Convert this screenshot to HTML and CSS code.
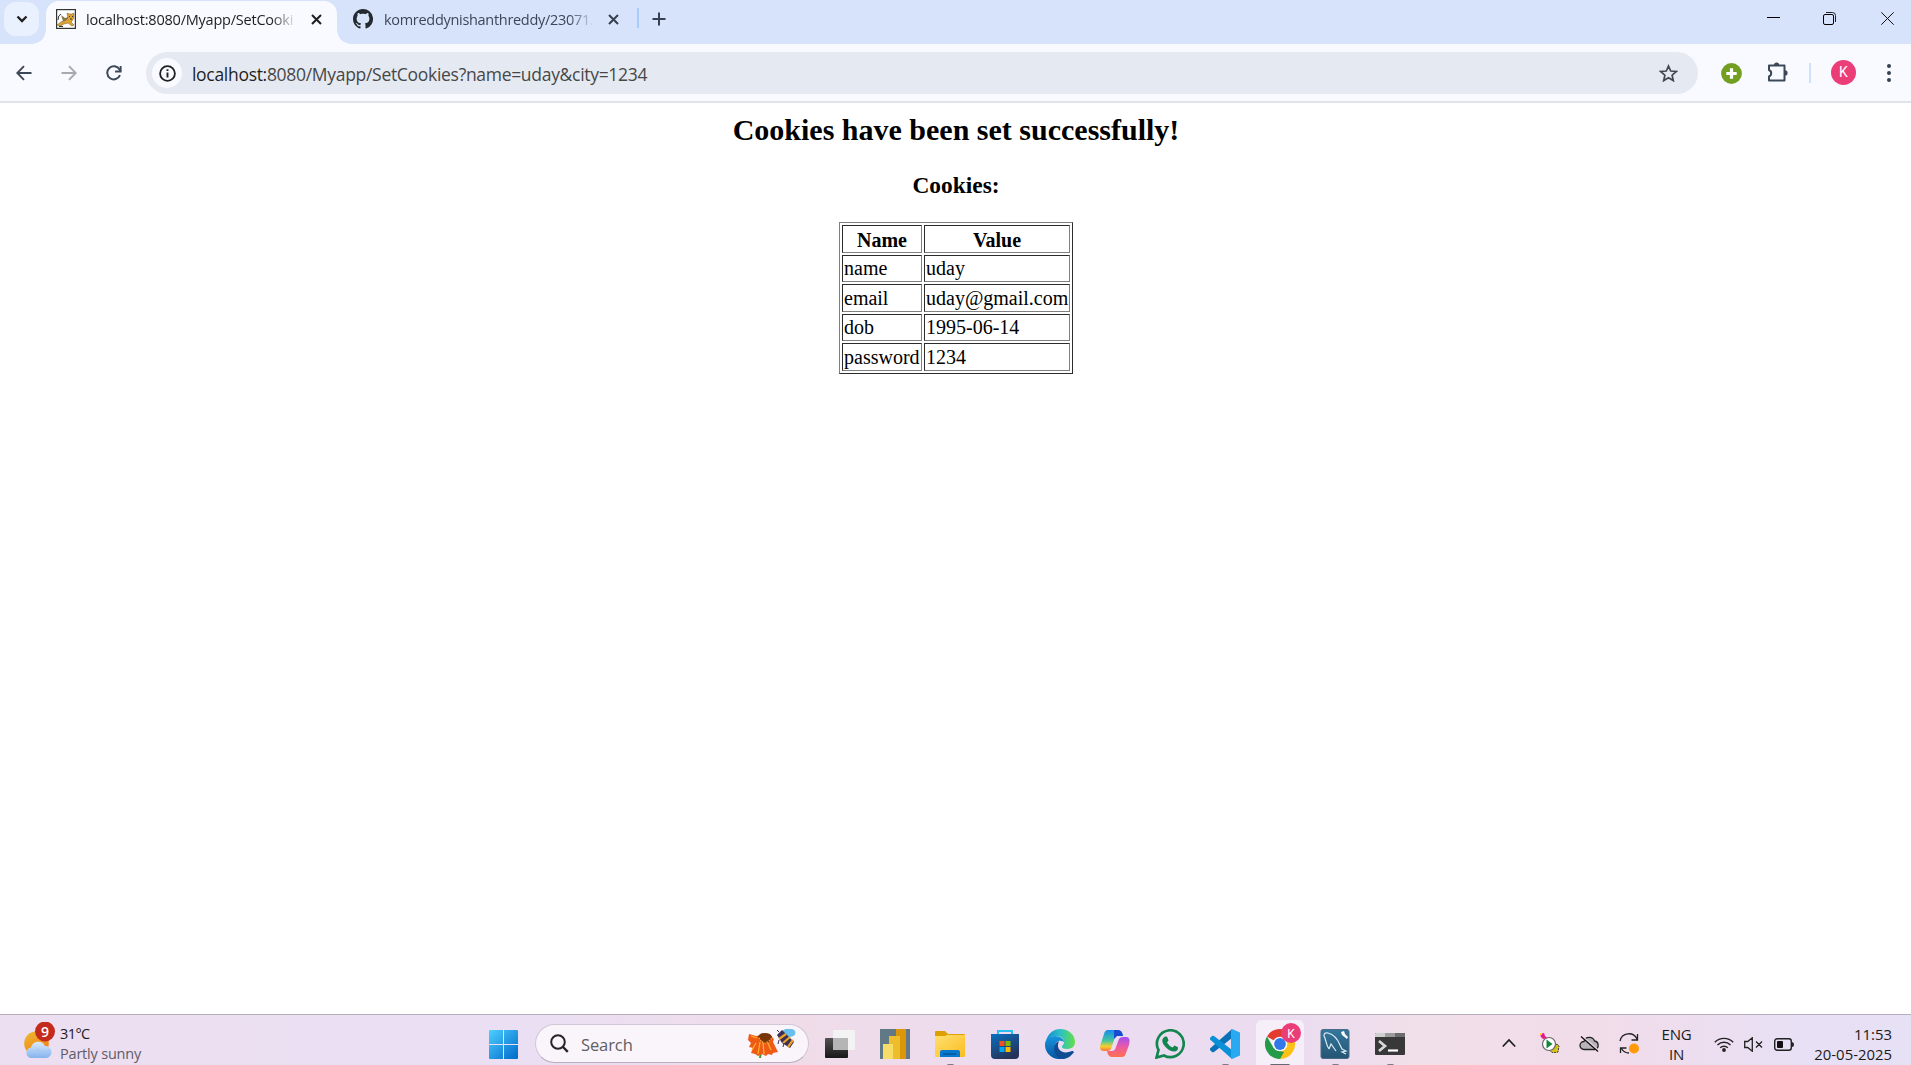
FILE: index.html
```html
<!DOCTYPE html>
<html lang="en">
<head>
<meta charset="utf-8">
<title>localhost:8080/Myapp/SetCookies</title>
<link rel="stylesheet" href="styles.css">
</head>
<body>
<header class="tabstrip">
  <button class="tab-search" aria-label="Search tabs"><svg width="12" height="8" viewBox="0 0 12 8"><path d="M1.5 1.5 6 6 10.500 1.500" fill="none" stroke="#1f1f1f" stroke-width="2.300"/></svg></button>
  <div class="tab tab-active">
    <svg class="favicon" width="20" height="20" viewBox="0 0 20 20"><rect x=".6" y=".6" width="18.800" height="18.800" fill="#fff" stroke="#333" stroke-width="1.200"/><path d="M5 6l4 3 3-1 1 3-5 2-3 4-3-1 5-4z" fill="#8a7748"/><path d="M11 4l2 1h3l2-1v5l-2 3-1 1 3 3-2 1-4-3-4 1-4 2-3-1 4-3 5-2 2-2z" fill="#dda435" stroke="#73572a" stroke-width=".5"/><path d="M2 11q0-5 3-6M3 17.500h4M13 7.500h1M16 7.500h1M14 10h2" stroke="#333" fill="none"/></svg>
    <span class="tab-title">localhost:8080/Myapp/SetCooki</span>
    <svg class="tab-close" width="11" height="11" viewBox="0 0 11 11"><path d="M1 1l9 9M10 1l-9 9" stroke="#1f1f1f" stroke-width="2"/></svg>
  </div>
  <div class="tab">
    <svg class="favicon" width="20" height="20" viewBox="0 0 16 16"><path fill="#24292f" d="M8 0C3.580 0 0 3.580 0 8c0 3.540 2.290 6.530 5.470 7.590.4.070.550-.170.550-.380 0-.190-.010-.820-.010-1.490-2.010.370-2.530-.490-2.690-.940-.090-.230-.480-.940-.820-1.130-.280-.150-.680-.520-.010-.530.630-.010 1.080.580 1.230.820.720 1.210 1.870.870 2.330.660.070-.520.280-.870.510-1.070-1.780-.2-3.640-.890-3.640-3.950 0-.870.310-1.590.820-2.150-.080-.2-.360-1.020.080-2.120 0 0 .670-.210 2.200.820.640-.180 1.320-.270 2-.270s1.360.090 2 .270c1.530-1.040 2.200-.820 2.200-.820.440 1.100.160 1.920.080 2.120.510.560.820 1.270.820 2.150 0 3.070-1.870 3.750-3.650 3.950.290.250.540.730.540 1.480 0 1.070-.010 1.930-.010 2.200 0 .210.150.460.550.380A8 8 0 0 0 8 0z"/></svg>
    <span class="tab-title muted">komreddynishanthreddy/23071.</span>
    <svg class="tab-close" width="11" height="11" viewBox="0 0 11 11"><path d="M1 1l9 9M10 1l-9 9" stroke="#354050" stroke-width="2"/></svg>
  </div>
  <span class="tab-divider"></span>
  <svg class="new-tab" width="14" height="14" viewBox="0 0 14 14"><path d="M7 .5v13M.5 7h13" stroke="#354050" stroke-width="2"/></svg>
  <div class="window-controls">
    <svg width="13" height="13"><path d="M0 5.500h13" stroke="#000"/></svg>
    <svg width="13" height="13"><rect x=".5" y="2.500" width="10" height="10" rx="1.500" fill="none" stroke="#000"/><path d="M3 .5h6.500q3 0 3 3V10" fill="none" stroke="#222"/></svg>
    <svg width="13" height="13"><path d="M.3.3l12.400 12.400M12.700.3.3 12.700" stroke="#111"/></svg>
  </div>
</header>
<nav class="toolbar">
  <svg class="back" width="16" height="16" viewBox="0 0 16 16"><path d="M15.500 8H1.500M8 1.200 1.300 8 8 14.800" fill="none" stroke="#3c4858" stroke-width="1.900"/></svg>
  <svg class="forward" width="16" height="16" viewBox="0 0 16 16"><path d="M.5 8h14M8 1.200 14.700 8 8 14.800" fill="none" stroke="#a6a9ae" stroke-width="1.900"/></svg>
  <svg class="reload" width="16" height="16" viewBox="0 0 16 16"><path d="M14 10.200A6.600 6.600 0 1 1 13.600 4.500L14.500 6" fill="none" stroke="#3c4858" stroke-width="2"/><path d="M15.600 1v6.500H9.100V5.600h4.600V1z" fill="#3c4858"/></svg>
  <div class="omnibox">
    <span class="site-info"><svg width="17" height="17" viewBox="0 0 17 17"><circle cx="8.500" cy="8.500" r="7.400" fill="none" stroke="#1f1f1f" stroke-width="1.800"/><path d="M8.500 7.500v5M8.500 4.300v1.800" stroke="#1f1f1f" stroke-width="1.900"/></svg></span>
    <span class="url"><span class="host">localhost:</span>8080/Myapp/SetCookies?name=uday&amp;city=1234</span>
    <svg class="star" width="19" height="18" viewBox="0 0 19 18"><path d="M9.500 2l2.200 5 5.600.5-4.200 3.700 1.200 5.400-4.800-2.900-4.800 2.900 1.200-5.400L1.700 7.500l5.600-.5z" fill="none" stroke="#43474e" stroke-width="1.700"/></svg>
  </div>
  <svg class="extension" width="21" height="21" viewBox="0 0 21 21"><circle cx="10.500" cy="10.500" r="10.400" fill="#739f20"/><path d="M10.500 5.300v10.400M5.300 10.500h10.400" stroke="#fff" stroke-width="3.200"/></svg>
  <svg class="puzzle" width="21" height="21" viewBox="0 0 21 21"><path d="M2 3.500h15.500v15H2V14.500a3.500 3.500 0 0 0 0-6.500z" fill="none" stroke="#3c4858" stroke-width="2" stroke-linejoin="round"/><path d="M7 3a2.600 2.600 0 0 1 5.200 0zM18 8.300a2.600 2.600 0 0 1 0 5.200z" fill="#3c4858"/></svg>
  <span class="toolbar-divider"></span>
  <span class="avatar">K</span>
  <svg class="menu" width="4" height="18" viewBox="0 0 4 18"><g fill="#354050"><circle cx="2" cy="2" r="2"/><circle cx="2" cy="9" r="2"/><circle cx="2" cy="16" r="2"/></g></svg>
</nav>
<main class="page">
  <h2>Cookies have been set successfully!</h2>
  <h3>Cookies:</h3>
  <table>
    <tr class="tall"><th class="col-name">Name</th><th class="col-value">Value</th></tr>
    <tr><td>name</td><td>uday</td></tr>
    <tr class="tall"><td>email</td><td>uday@gmail.com</td></tr>
    <tr><td>dob</td><td>1995-06-14</td></tr>
    <tr class="tall"><td>password</td><td>1234</td></tr>
  </table>
</main>
<footer class="taskbar">
  <div class="weather">
    <svg width="32" height="38" viewBox="0 0 32 38"><defs><linearGradient id="sun" x2=".6" y2="1"><stop stop-color="#e9bd35"/><stop offset="1" stop-color="#f77d12"/></linearGradient><linearGradient id="cloud" x2="0" y2="1"><stop stop-color="#dceafc"/><stop offset="1" stop-color="#85b3ec"/></linearGradient></defs><circle cx="12.500" cy="21.500" r="12.300" fill="url(#sun)"/><path d="M7 36a5.300 5.300 0 0 1 0-10.500A7.500 7.500 0 0 1 21 24a6 6 0 0 1 1 12z" fill="url(#cloud)"/><path d="M6 30q7 0 7-3 5 4 13 2" fill="none" stroke="#a5c6f3"/><circle cx="21" cy="9.500" r="10" fill="#c42b1c"/><text x="21" y="14.500" class="badge-text">9</text></svg>
    <div class="weather-text"><span>31°C</span><span class="weather-desc">Partly sunny</span></div>
  </div>
  <svg class="start" width="29" height="29" viewBox="0 0 29 29"><defs><linearGradient id="win" gradientUnits="userSpaceOnUse" x2="29" y2="29"><stop stop-color="#4dd0ff"/><stop offset="1" stop-color="#0067ca"/></linearGradient></defs><path d="M1 0h13v14H0V1q0-1 1-1zM15 0h13q1 0 1 1v13H15zM0 15h14v14H1q-1 0-1-1zM15 15h14v13q0 1-1 1H15z" fill="url(#win)"/></svg>
  <div class="search">
    <svg width="19" height="19" viewBox="0 0 19 19"><circle cx="8" cy="8" r="6.800" fill="none" stroke="#252525" stroke-width="2"/><path d="M13 13l4.800 4.800" stroke="#252525" stroke-width="2.400"/></svg>
    <span>Search</span>
    <svg class="flower" width="48" height="30" viewBox="0 0 48 30"><path d="M12 23h2l-1 6h-2z" fill="#3f9b2a"/><path d="M1 5l7 2 8-1 7 1 3 3-1 3 2 4 3 6-5 1-1 2-4-1-2 2-4-2-4 2-3-2-4-1 2-5-4-1 2-4-3-3z" fill="#ef5a17"/><path d="M8 14l-4 7M12 13l-2 12M15 13l1 12M19 12l4 9M9 9L3 7" stroke="#ffae29" stroke-width="1.300"/><path d="M10 8q1-4 7-4 6 0 7 4l-3 5-5 1z" fill="#773408"/><path d="M11 9l2 3 4 2 4-2 3-3" fill="none" stroke="#f0ad38" stroke-width="1.500" stroke-dasharray="1 1.500"/><path d="M33 3q8-7 14-1 2 6-7 6z" fill="#67bff0"/><path d="M29 6l5-5 5 5 7 7-4 6-8-5z" fill="#3d2e58"/><path d="M31 10l7-5M35 14l7-6M40 18l5-7" stroke="#e9a127" stroke-width="2.200"/><path d="M31 11l-1 4M36 14l-1 4M31 3l-2-2" stroke="#3d2e58"/></svg>
  </div>
  <ul class="apps">
    <li><svg width="30" height="30" viewBox="0 0 30 30"><defs><linearGradient id="tv" x2="0" y2="1"><stop stop-color="#515151"/><stop offset="1" stop-color="#181818"/></linearGradient></defs><rect y="9" width="23" height="20" rx="1" fill="url(#tv)"/><rect x="8" y="1" width="22" height="20" rx="1" fill="#f3f3f3"/><path d="M8 9h15v12H8z" fill="#b5b5b5"/></svg></li>
    <li><svg width="30" height="30"><path d="M0 0h30v30H0z" fill="#607984"/><path d="M16 0h10v30H16z" fill="#dc9609"/><path d="M9 7h11v23H9z" fill="#edbd2c"/><path d="M3 15h10v15H3z" fill="#f8dc68"/></svg></li>
    <li class="running"><svg width="30" height="27" viewBox="0 0 30 27"><defs><linearGradient id="fold" x2="1" y2="1"><stop stop-color="#ffdf70"/><stop offset="1" stop-color="#fbbd20"/></linearGradient></defs><path d="M0 1q0-1 1-1h9l3 3h16q1 0 1 1v4H0z" fill="#dda000"/><path d="M0 5h10l2-1h18v21q0 1-1 1H1q-1 0-1-1z" fill="url(#fold)"/><path d="M5 26v-5q0-2 2-2h16q2 0 2 2v5z" fill="#0877ce"/><path d="M8 23h13" stroke="#064d8d" stroke-width="1.200"/></svg></li>
    <li><svg width="30" height="30" viewBox="0 0 30 30"><defs><linearGradient id="bag" x2=".5" y2="1"><stop stop-color="#0870c0"/><stop offset="1" stop-color="#273259"/></linearGradient></defs><path d="M8 7V2h14v5" fill="none" stroke="#29bdf1" stroke-width="2"/><path d="M1 5h28v21q0 4-4 4H5q-4 0-4-4z" fill="url(#bag)"/><path d="M9.500 12h5v5h-5z" fill="#f25022"/><path d="M15.500 12h5v5h-5z" fill="#7fba00"/><path d="M9.500 18h5v5h-5z" fill="#00a4ef"/><path d="M15.500 18h5v5h-5z" fill="#ffb900"/></svg></li>
    <li><svg width="30" height="30" viewBox="0 0 30 30"><defs><linearGradient id="edgea"><stop stop-color="#168bd5"/><stop offset=".5" stop-color="#2bc1c3"/><stop offset="1" stop-color="#67df47"/></linearGradient><linearGradient id="edgeb" x2="0" y2="1"><stop stop-color="#1696dd"/><stop offset="1" stop-color="#0754a0"/></linearGradient></defs><path d="M1 12C3 4 9 0 15 0c9 0 15 6 15 13 0 5-4 7-8 7-3 0-5-1-5-2 0-2 2-2 2-5 0-4-4-6-8-6-5 0-8 2-10 5z" fill="url(#edgea)"/><path d="M0 16C0 10 4 7 10 7c5 0 9 3 9 6-5-3-9 0-9 5 0 6 5 11 10 11-11 4-20-4-20-13z" fill="url(#edgeb)"/><path d="M14 12c-8 4-6 16 4 18 5 0 9-4 11-7-1-1-1-1-2-1-9 4-17-1-13-10z" fill="#104c92"/></svg></li>
    <li><svg width="30" height="28" viewBox="0 0 30 28"><defs><linearGradient id="copa" x2="0" y2="1"><stop stop-color="#168bed"/><stop offset=".5" stop-color="#43c5a1"/><stop offset=".78" stop-color="#f3d12e"/><stop offset="1" stop-color="#fa743d"/></linearGradient><linearGradient id="copb" x2="0" y2="1"><stop stop-color="#a14ef5"/><stop offset=".5" stop-color="#ed5aa3"/><stop offset="1" stop-color="#ff704d"/></linearGradient></defs><path d="M8 0h10q4 0 5 6h-6q-2 0-3 4l-3 9q-1 2-4 2H4q-6 0-3-8L4 4q1-4 4-4z" fill="url(#copa)"/><path d="M14 0h4q4 0 5 6h-6l-3 3z" fill="#174bd0"/><path d="M22 27H12q-4 0-5-6h5q3 0 4-4l3-8q1-2 4-2h3q5 0 3 8l-3 8q-1 4-4 4z" fill="url(#copb)"/></svg></li>
    <li><svg width="30" height="30" viewBox="0 0 30 30"><path d="M1.500 28.500l2-7.500A13.400 13.400 0 1 1 9 26.500z" fill="none" stroke="#13864f" stroke-width="2.700"/><path d="M10 7.500q2-.5 2.500 1l1 3-1.500 2q2 3.500 5.500 5l2-2 3.500 1.700q.5 4-4 4.300-4 0-8-4-4-4-3.700-7.500 0-2 2.700-3.500z" fill="#13864f"/></svg></li>
    <li class="running"><svg width="30" height="30" viewBox="0 0 30 30"><path d="M22 0v9L4 23q-1 .5-2 0l-2-2q-.5-1 0-1.500z" fill="#0872b9"/><path d="M0 10.500q-.5-1 0-1.500l2-2q1-.6 2 0l18 14v9z" fill="#0990d7"/><path d="M22 0l8 3.500v23L22 30q-1 0-1-1V1q0-1 1-1z" fill="#28a9f2"/></svg></li>
    <li class="running chrome"><svg width="38" height="38" viewBox="0 0 38 38"><g transform="translate(0 6)"><path d="M15 15L2 7.500A15 15 0 0 1 28 7.500z" fill="#e33b2e"/><path d="M15 15l13-7.500A15 15 0 0 1 15 30z" fill="#fbc116"/><path d="M15 30A15 15 0 0 1 2 7.500l6.500 11.300L15 22l4 1z" fill="#249b49"/><path d="M15 7.500h13.500" stroke="#e33b2e" stroke-width="1.500"/><circle cx="15" cy="15" r="7.300" fill="#fff"/><circle cx="15" cy="15" r="5.900" fill="#3178e8"/></g><circle cx="26" cy="10" r="10" fill="#eb3d77"/><text x="26" y="14.500" class="chrome-badge">K</text></svg></li>
    <li class="running"><svg width="30" height="30" viewBox="0 0 30 30"><defs><linearGradient id="sql" x2="0" y2="1"><stop stop-color="#34779e"/><stop offset="1" stop-color="#245574"/></linearGradient></defs><rect x="1" y=".5" width="28" height="29" rx="2" fill="url(#sql)" stroke="#466c87"/><path d="M9 20C6 16 6 10 4 7q0-4 4-3 8 2 12 12l2 4 4 2-4 1 4 2M9 20l2-5 5 7" fill="none" stroke="#ddecf4" stroke-width="1.200"/><path d="M21 3l1 3 5 4 1-2-3-3-1-3z" fill="#fff"/></svg></li>
    <li class="running"><svg width="30" height="22" viewBox="0 0 30 22"><rect width="30" height="22" rx="1" fill="#383838"/><path d="M0 4V1q0-1 1-1h9v4z" fill="#cfcfcf"/><path d="M10 0h10v4H10z" fill="#9b9b9b"/><path d="M20 0h9q1 0 1 1v3H20z" fill="#6c6c6c"/><path d="M4 8l6 5-6 5" fill="none" stroke="#d8d8d8" stroke-width="2.700"/><path d="M13 17.500h10" stroke="#fff" stroke-width="2.200"/></svg></li>
  </ul>
  <div class="tray">
    <svg class="chevron" width="14" height="10" viewBox="0 0 14 10"><path d="M.8 8.500 7 2l6.200 6.500" fill="none" stroke="#1c1c1c" stroke-width="1.700"/></svg>
    <svg class="debug" width="20" height="20" viewBox="0 0 20 20"><path d="M9 17l8-6 2 2-1 6-5 1z" fill="#d5c119" stroke="#333" stroke-dasharray="2 1"/><circle cx="9" cy="11" r="6.500" fill="#fff" stroke="#686868" stroke-width="1.200"/><path d="M6.500 6.500v9l6-4.500z" fill="#14863c"/><path d="M0 1l4-1 1 3 2 2-4 1-2-2z" fill="#ec168b"/><path d="M0 0h2v2H0z" fill="#f2df19"/></svg>
    <svg class="cloud" width="20" height="16" viewBox="0 0 20 16"><path d="M5 13.500a4 4 0 0 1 0-8A5.500 5.500 0 0 1 15.500 5a4.300 4.300 0 0 1 0 8.500z" fill="#b8b4b9" stroke="#222" stroke-width="1.300"/><path d="M3 0l17 15" stroke="#f1dcea" stroke-width="1.500"/><path d="M2 .5l17 15" stroke="#111" stroke-width="1.300"/></svg>
    <svg class="sync" width="20" height="21" viewBox="0 0 20 21"><path d="M1 8A9 9 0 0 1 18 6M18.500 1v6h-6M1.500 20v-5h6M2 15q3 5 8 5" fill="none" stroke="#222" stroke-width="1.300"/><circle cx="15" cy="15.500" r="5" fill="#ff9908"/></svg>
    <div class="language"><span>ENG</span><span>IN</span></div>
    <svg class="wifi" width="20" height="15" viewBox="0 0 20 15"><path d="M.8 5.200a13 13 0 0 1 18.400 0M3.500 8a9.200 9.200 0 0 1 13 0M6.200 10.800a5.400 5.400 0 0 1 7.600 0" fill="none" stroke="#222" stroke-width="1.400"/><circle cx="10" cy="13" r="1.900" fill="#222"/></svg>
    <svg class="speaker" width="20" height="15" viewBox="0 0 20 15"><path d="M.7 4.500h3L8.300.8v13.400L3.700 10.500h-3zM12 4.500l6 6M18 4.500l-6 6" fill="none" stroke="#222" stroke-width="1.300"/></svg>
    <svg class="battery" width="20" height="13" viewBox="0 0 20 13"><rect x=".7" y=".7" width="16.600" height="11.600" rx="2.500" fill="none" stroke="#222" stroke-width="1.400"/><rect x="3" y="3" width="6" height="7" rx="1" fill="#111"/><path d="M18 4q2 0 2 2.500T18 9z" fill="#222"/></svg>
    <div class="clock"><span>11:53</span><span>20-05-2025</span></div>
  </div>
</footer>
</body>
</html>
```
FILE: styles.css
```css
* { box-sizing: border-box; }
body {
  margin: 0;
  height: 1065px;
  overflow: hidden;
  display: flex;
  flex-direction: column;
  background: #fff;
  font-family: "Open Sans", "Noto Sans", sans-serif;
}
svg { display: block; flex: none; }

.tabstrip {
  height: 44px;
  flex: none;
  display: flex;
  background: #d7e3fa;
}
.tab-search {
  width: 35px;
  height: 34px;
  margin: 2px 7px 0 4px;
  padding: 0;
  border: 0;
  border-radius: 12px;
  background: #e9f0fe;
  display: flex;
  align-items: center;
  justify-content: center;
}
.tab {
  width: 291px;
  height: 43px;
  margin-top: 1px;
  padding: 8px 0 0 10px;
  display: flex;
  position: relative;
}
.tab-active {
  background: #f9faff;
  border-radius: 13px 13px 0 0;
}
.tab-active::before, .tab-active::after {
  content: "";
  position: absolute;
  bottom: 0;
  width: 14px;
  height: 14px;
}
.tab-active::before {
  left: -14px;
  background: radial-gradient(circle at 0 0, transparent 13.5px, #f9faff 14px);
}
.tab-active::after {
  right: -14px;
  background: radial-gradient(circle at 100% 0, transparent 13.5px, #f9faff 14px);
}
.tab:not(.tab-active) { padding-left: 16px; width: 282px; }
.tab-title {
  width: 211px;
  margin-left: 10px;
  height: 22px;
  line-height: 21px;
  font-size: 14.5px;
  letter-spacing: -0.22px;
  color: #1f1f1f;
  white-space: nowrap;
  -webkit-mask-image: linear-gradient(90deg, #000 185px, transparent 211px);
  mask-image: linear-gradient(90deg, #000 185px, transparent 211px);
}
.tab-title.muted { color: #3c4858; margin-left: 11px; letter-spacing: -0.3px; }
.tab-close { margin: 5px 0 0 14px; }
.tab-divider {
  width: 2px;
  height: 20px;
  margin: 8px 13px 0 18px;
  background: #a5ceff;
}
.new-tab { margin-top: 12px; }
.window-controls {
  display: flex;
  gap: 43px;
  margin: 12px 17px 0 auto;
}
.window-controls svg:nth-child(2) { margin-right: 2px; }

.toolbar {
  height: 59px;
  flex: none;
  display: flex;
  align-items: center;
  padding: 0 0 0 16px;
  background: #f9faff;
  border-bottom: 2px solid #dfe3ec;
}
.forward { margin-left: 29px; }
.reload { margin-left: 29px; }
.omnibox {
  width: 1552px;
  height: 42px;
  margin: 1px 0 0 24px;
  padding: 0 20px 0 6px;
  border-radius: 21px;
  background: #e5eaf2;
  display: flex;
  align-items: center;
}
.site-info {
  width: 30px;
  height: 30px;
  border-radius: 50%;
  background: #f9faff;
  display: flex;
  align-items: center;
  justify-content: center;
}
.url {
  margin: 1px auto 0 10px;
  font-size: 17.5px;
  letter-spacing: -0.3px;
  line-height: 24px;
  color: #474747;
}
.host { color: #1f1f1f; }
.extension { margin: 1px 0 0 23px; }
.puzzle { margin-left: 25px; }
.toolbar-divider {
  width: 2px;
  height: 20px;
  margin-left: 21px;
  background: #cfe1fd;
}
.avatar {
  width: 25px;
  height: 25px;
  margin-left: 20px;
  border-radius: 50%;
  background: #eb3d77;
  color: #fff;
  font: 14px/25px Roboto, sans-serif;
  text-align: center;
}
.menu { margin-left: 31px; }

.page {
  flex: 1;
  padding-top: 8px;
  font-family: "Liberation Serif", serif;
  color: #000;
  text-align: center;
}
.page h2 { margin: 0; padding-left: 1px; font-size: 30px; line-height: 38px; }
.page h3 { margin: 23px 0 25px; padding-left: 1px; font-size: 23.4px; line-height: 26px; }
table {
  width: 234px;
  margin: -1px auto 0 839px;
  table-layout: fixed;
  border: 1px solid;
  border-color: #808080 #2c2c2c #2c2c2c #808080;
  border-spacing: 2px;
  font-size: 20px;
  line-height: 23px;
  text-align: left;
}
tr { height: 27px; }
tr.tall { height: 28px; }
td, th {
  padding: 1px;
  border: 1px solid;
  border-color: #2c2c2c #808080 #808080 #2c2c2c;
}
th { text-align: center; padding: 2px 1px 0; }
.col-name { width: 80px; }
.col-value { width: 146px; }

.taskbar {
  height: 51px;
  flex: none;
  display: flex;
  border-top: 1px solid #b8adbc;
  background: linear-gradient(90deg, #ecdff1 0, #eadff3 28%, #f0dce9 42%, #ebdcf1 56%, #ebdcf0 68%, #f1dfe9 74%, #f1dcea 84%, #e8e0f4 94%, #e7e1f5 100%);
  font-size: 15px;
}
.weather { display: flex; width: 488px; padding: 7px 0 0 24px; }
.badge-text { font: 600 14px "Open Sans", sans-serif; fill: #fff; text-anchor: middle; }
.weather-text, .language, .clock {
  display: flex;
  flex-direction: column;
  line-height: 20px;
  color: #1b1b1b;
}
.weather-text { margin: 2px 0 0 4px; font-size: 14.5px; letter-spacing: -0.2px; }
.weather-text span:first-child { letter-spacing: -0.6px; }
.weather-desc { color: #625b65; }
.start { margin: 15px 0 0 1px; }
.search {
  width: 274px;
  height: 39px;
  margin: 9px 0 0 17px;
  padding: 0 12px 0 14px;
  display: flex;
  align-items: center;
  border: 1px solid #d3c7d7;
  border-bottom-color: #b9aebe;
  border-radius: 20px;
  background: #f9f5fb;
  color: #605d63;
  font-size: 16.5px;
}
.search span { margin: 2px 0 0 12px; letter-spacing: -0.1px; }
.flower { margin-left: auto; }
.apps {
  display: grid;
  grid-template-columns: repeat(11, 55px);
  width: 605px;
  height: 50px;
  margin: 0 0 0 3.5px;
  padding: 0;
  list-style: none;
}
.apps li {
  display: flex;
  align-items: center;
  justify-content: center;
  height: 58px;
  position: relative;
}
.apps .running::after {
  content: "";
  position: absolute;
  left: 24px;
  top: 49px;
  width: 7px;
  height: 3px;
  border-radius: 2px;
  background: #83788a;
}
.apps .chrome {
  width: 48px;
  height: 50px;
  margin: 5px 0 0 3.5px;
  align-items: flex-start;
  justify-content: flex-start;
  padding: 3px 0 0 9px;
  border-radius: 6px 6px 0 0;
  background: #f6eef8;
}
.apps .chrome::after { left: 14px; top: 44px; width: 20px; background: #626779; }
.chrome-badge { font: 12px Roboto, sans-serif; fill: #fff; text-anchor: middle; }
.tray { display: flex; flex: 1; padding-top: 14px; }
.chevron { margin: 9px 0 0 84px; }
.debug { margin: 4px 0 0 24px; }
.cloud { margin: 7px 0 0 19px; }
.sync { margin: 4px 0 0 20px; }
.language { margin: -5px 0 0 22px; width: 32px; text-align: center; }
.language span { letter-spacing: -0.2px; }
.wifi { margin: 8px 0 0 21px; }
.speaker { margin: 8px 0 0 10px; }
.battery { margin: 9px 0 0 10px; }
.clock { margin: -5px 19px 0 auto; text-align: right; font-size: 14.9px; }
```
